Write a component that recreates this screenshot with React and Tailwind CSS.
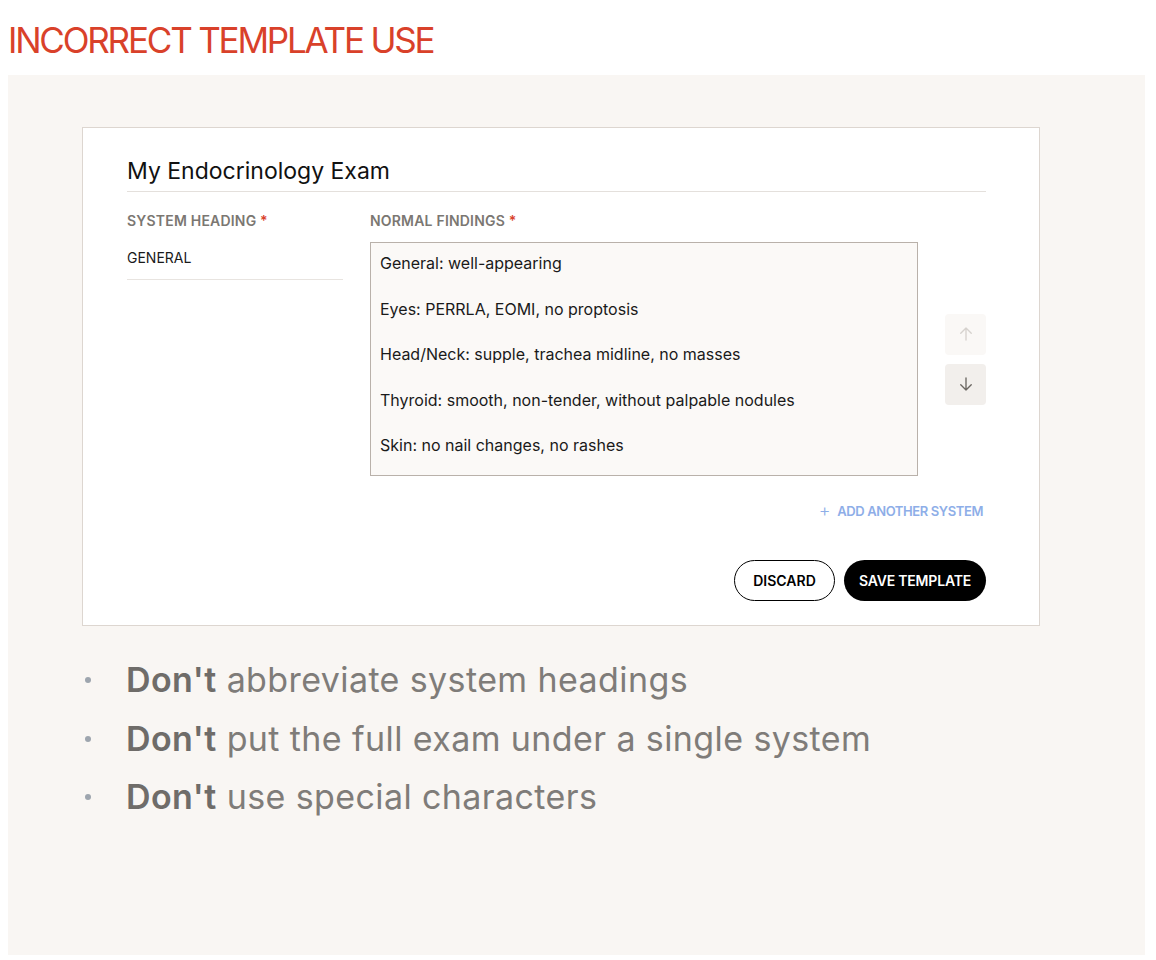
import React from "react";

const findings = [
  "General: well-appearing",
  "Eyes: PERRLA, EOMI, no proptosis",
  "Head/Neck: supple, trachea midline, no masses",
  "Thyroid: smooth, non-tender, without palpable nodules",
  "Skin: no nail changes, no rashes",
];

const bullets = [
  "abbreviate system headings",
  "put the full exam under a single system",
  "use special characters",
];

export default function App() {
  return (
    <div className="w-[1156px] h-[960px] bg-white" style={{ fontFamily: "Inter, 'Noto Sans', sans-serif" }}>
      <div className="pl-[8px] pt-[20px] h-[75px]">
        <h1 className="text-[35px] leading-[40px] text-[#d9412a] tracking-[-2.2px] font-normal">INCORRECT TEMPLATE USE</h1>
      </div>
      <div className="ml-[8px] w-[1137px] h-[880px] bg-[#f9f6f3] pt-[52px] pl-[74px]">
        <div className="w-[958px] h-[499px] bg-white border border-[#ddd6d0] pt-[28px] pl-[44px] pr-[53px]">
          <div className="text-[23px] leading-[30px] text-[#111] border-b border-[#e4e0dc] pb-[5px]">My Endocrinology Exam</div>
          <div className="flex mt-[20px]">
            <div className="w-[216px]">
              <div className="text-[14px] leading-[18px] font-semibold text-[#7b7772] tracking-[0.2px]">SYSTEM HEADING <span className="text-[#d9412a]">*</span></div>
              <div className="mt-[20px] h-[30px] border-b border-[#e8e4e0] text-[14px] leading-[16px] text-[#1a1a1a]">GENERAL</div>
            </div>
            <div className="ml-[27px] w-[548px]">
              <div className="text-[14px] leading-[18px] font-semibold text-[#7b7772] tracking-[0.2px]">NORMAL FINDINGS <span className="text-[#d9412a]">*</span></div>
              <div className="mt-[12px] h-[234px] bg-[#fbf9f7] border border-[#b9b1aa] pl-[9px] pt-[10px]">
                {findings.map((f) => (
                  <div key={f} className="text-[16px] leading-[20px] h-[45.5px] text-[#1a1a1a]">{f}</div>
                ))}
              </div>
            </div>
            <div className="ml-[27px] w-[41px] flex flex-col justify-center pt-[30px] gap-[9px]">
              <div className="w-[41px] h-[41px] rounded-[4px] bg-[#faf8f6] flex items-center justify-center">
                <svg width="18" height="18" viewBox="0 0 24 24" fill="none" stroke="#d6d2ce" strokeWidth="1.8" strokeLinecap="round" strokeLinejoin="round"><path d="M12 20V4M5 11l7-7 7 7" /></svg>
              </div>
              <div className="w-[41px] h-[41px] rounded-[4px] bg-[#f2efec] flex items-center justify-center">
                <svg width="18" height="18" viewBox="0 0 24 24" fill="none" stroke="#6b6762" strokeWidth="1.8" strokeLinecap="round" strokeLinejoin="round"><path d="M12 4v16M5 13l7 7 7-7" /></svg>
              </div>
            </div>
          </div>
          <div className="flex justify-end mt-[27px] pr-[3px]">
            <div className="flex items-center gap-[7px] text-[13px] leading-[16px] font-semibold text-[#8eaee8] tracking-[-0.4px]">
              <span className="text-[18px] font-light leading-[16px]">+</span>
              <span>ADD ANOTHER SYSTEM</span>
            </div>
          </div>
          <div className="flex justify-end gap-[9px] mt-[41px]">
            <button className="w-[101px] h-[41px] rounded-full border border-black bg-white text-[14px] font-semibold text-black">DISCARD</button>
            <button className="w-[142px] h-[41px] rounded-full bg-black text-[14px] font-semibold text-white tracking-[-0.2px]">SAVE TEMPLATE</button>
          </div>
        </div>
        <ul className="mt-[25px]">
          {bullets.map((b) => (
            <li key={b} className="flex items-center h-[58.5px]">
              <span className="w-[6px] h-[6px] rounded-full bg-[#9ea5ae] ml-[3px] mr-[35px]"></span>
              <span className="text-[34px] leading-[40px] text-[#7f7c79] tracking-[0.4px]"><span className="font-semibold text-[#6f6c69]">Don't</span> {b}</span>
            </li>
          ))}
        </ul>
      </div>
    </div>
  );
}
